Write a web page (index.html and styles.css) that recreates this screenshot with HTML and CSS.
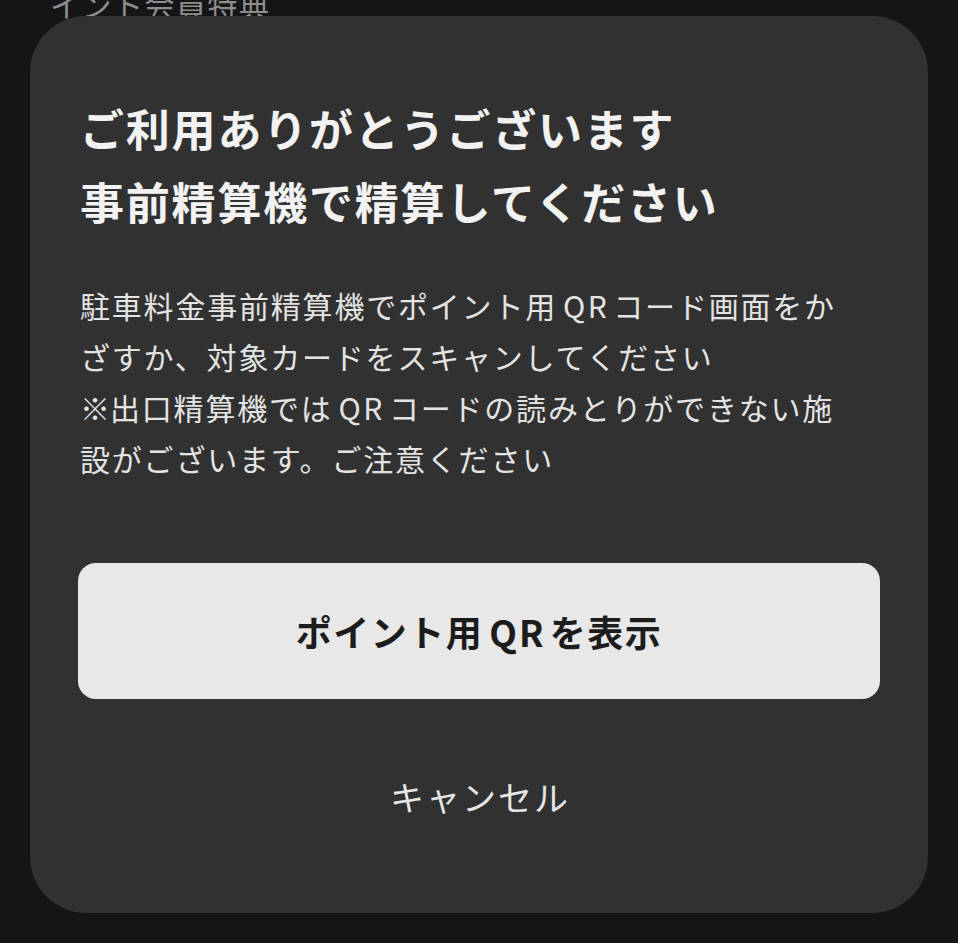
FILE: index.html
```html
<!DOCTYPE html>
<html lang="ja">
<head>
<meta charset="utf-8">
<title>ご利用ありがとうございます</title>
<link rel="stylesheet" href="styles.css">
</head>
<body>
<div class="page">
  <div class="bg-text">イント会員特典</div>
</div>
<div class="overlay">
  <div class="dialog">
    <h1 class="title">ご利用ありがとうございます<br>事前精算機で精算してください</h1>
    <p class="message">駐車料金事前精算機でポイント用<span class="latin">QR</span>コード画面をか<br>ざすか、対象カードをスキャンしてください<br><span class="mark">※</span>出口精算機では<span class="latin">QR</span>コードの読みとりができない施<br>設がございます。ご注意ください</p>
    <button class="primary">ポイント用<span class="latin-b">QR</span>を表示</button>
    <div class="cancel">キャンセル</div>
  </div>
</div>
</body>
</html>
```
FILE: styles.css
```css
html, body {
  margin: 0;
  padding: 0;
  background: #151517;
  width: 958px;
  height: 943px;
  overflow: hidden;
  font-family: "Noto Sans CJK JP", "Noto Sans", sans-serif;
}
.page {
  padding: 0 0 0 50px;
}
.bg-text {
  margin-top: -14px;
  font-size: 30px;
  line-height: 36px;
  letter-spacing: 1.5px;
  color: #8e8e8e;
}
.overlay {
  position: absolute;
  inset: 0;
  padding: 16px 30px 30px 30px;
}
.dialog {
  background: #313131;
  border-radius: 56px;
  height: 897px;
  box-sizing: border-box;
  padding: 76px 48px 0 50px;
  display: flex;
  flex-direction: column;
}
.title {
  margin: 0;
  font-size: 44px;
  line-height: 73px;
  font-weight: 700;
  color: #f2f2f2;
  letter-spacing: 1.8px;
}
.message {
  margin: 42px 0 0 0;
  font-size: 30px;
  line-height: 51px;
  letter-spacing: 1.8px;
  color: #e4e4e4;
  font-weight: 400;
  white-space: nowrap;
}
.latin {
  margin: 0 4px 0 6px;
  letter-spacing: 2.5px;
}
.mark {
  letter-spacing: -10px;
  margin-right: 10px;
}
.primary {
  margin-top: 79px;
  margin-left: -2px;
  height: 136px;
  border: none;
  border-radius: 18px;
  background: #e8e8e8;
  color: #1c1c1c;
  font-family: inherit;
  font-size: 36px;
  font-weight: 700;
  letter-spacing: 1.5px;
  padding: 0;
}
.latin-b {
  margin: 0 4px 0 6px;
  letter-spacing: 2px;
}
.cancel {
  margin-top: 73px;
  text-align: center;
  font-size: 34px;
  line-height: 50px;
  letter-spacing: 2px;
  color: #e6e6e6;
}
```
